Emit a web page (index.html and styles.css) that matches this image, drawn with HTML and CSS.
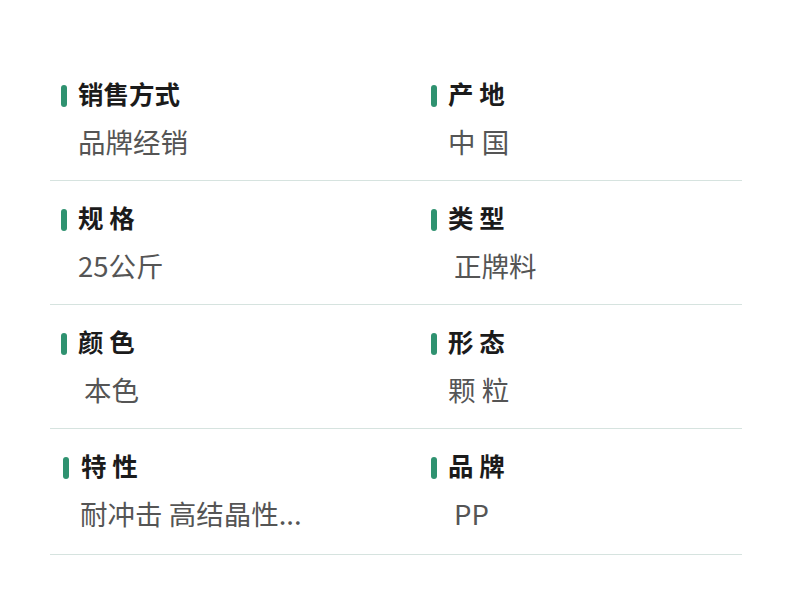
FILE: index.html
```html
<!DOCTYPE html>
<html lang="zh">
<head>
<meta charset="utf-8">
<link rel="stylesheet" href="styles.css">
</head>
<body>
<div class="specs">
  <div class="row">
    <div class="item"><div class="label"><span class="bar"></span>销售方式</div><div class="value">品牌经销</div></div>
    <div class="item"><div class="label"><span class="bar"></span>产 地</div><div class="value">中 国</div></div>
  </div>
  <div class="row">
    <div class="item"><div class="label"><span class="bar"></span>规 格</div><div class="value">25公斤</div></div>
    <div class="item"><div class="label"><span class="bar"></span>类 型</div><div class="value indent">正牌料</div></div>
  </div>
  <div class="row">
    <div class="item"><div class="label"><span class="bar"></span>颜 色</div><div class="value indent">本色</div></div>
    <div class="item"><div class="label"><span class="bar"></span>形 态</div><div class="value">颗 粒</div></div>
  </div>
  <div class="row last">
    <div class="item shift"><div class="label"><span class="bar"></span>特 性</div><div class="value">耐冲击 高结晶性...</div></div>
    <div class="item"><div class="label"><span class="bar"></span>品 牌</div><div class="value indent">PP</div></div>
  </div>
</div>
</body>
</html>
```

FILE: styles.css
```css
html, body {
  margin: 0;
  padding: 0;
  background: #ffffff;
}
body {
  font-family: "Noto Sans CJK SC", "Noto Sans", sans-serif;
}
.specs {
  margin: 57px 0 0 50px;
  width: 692px;
}
.row {
  display: grid;
  grid-template-columns: 370px 1fr;
  padding: 23px 0 19px;
  border-bottom: 1px solid #d6e3df;
}
.row.last {
  padding-bottom: 21px;
}
.item {
  padding-left: 11px;
}
.item.shift {
  padding-left: 13px;
}
.label {
  display: flex;
  align-items: flex-start;
  height: 30px;
  line-height: 26px;
  font-size: 25.5px;
  font-weight: 700;
  color: #1b1b1b;
}
.bar {
  width: 6px;
  height: 22px;
  margin-top: 5px;
  border-radius: 3px;
  background: #2f9270;
  margin-right: 11px;
  flex: none;
}
.item.shift .bar {
  margin-right: 12px;
}
.value {
  margin-top: 13px;
  margin-bottom: 2px;
  padding-left: 17px;
  font-size: 27.5px;
  line-height: 36px;
  color: #555555;
  white-space: pre;
}
.value.indent {
  padding-left: 23px;
}
```
